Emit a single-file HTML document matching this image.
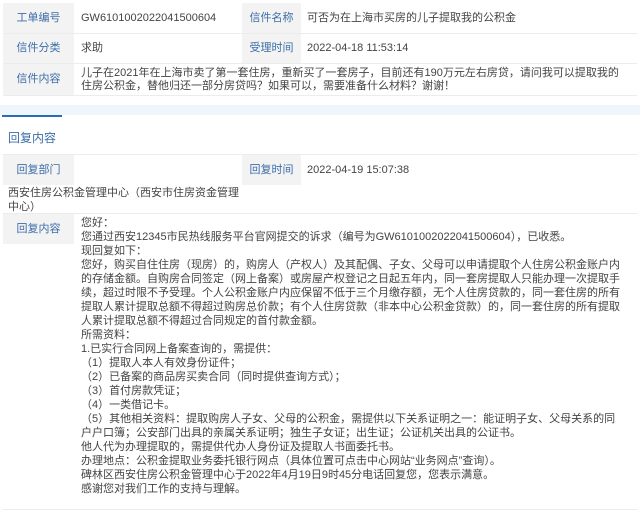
<!DOCTYPE html>
<html><head><meta charset="utf-8"><style>
*{margin:0;padding:0;box-sizing:border-box}
body{width:640px;height:513px;background:#fff;font-family:"Liberation Sans","Noto Sans CJK SC",sans-serif;font-size:11px;color:#444;position:relative;overflow:hidden}
.a{position:absolute;white-space:nowrap}
.lb{position:absolute;background:#f3f3f3;color:#3c6ea8;text-align:center}
.ln{position:absolute;background:#ececec}
</style></head><body>
<!-- top table -->
<div class="lb" style="left:3px;top:3px;width:71px;height:30px;line-height:30px">工单编号</div>
<div class="a" style="left:81px;top:3px;line-height:30px">GW6101002022041500604</div>
<div class="lb" style="left:242px;top:3px;width:59px;height:30px;line-height:30px">信件名称</div>
<div class="a" style="left:307px;top:3px;line-height:30px">可否为在上海市买房的儿子提取我的公积金</div>
<div class="ln" style="left:3px;top:33px;width:634px;height:1px"></div>
<div class="lb" style="left:3px;top:34px;width:71px;height:29px;line-height:29px">信件分类</div>
<div class="a" style="left:81px;top:34px;line-height:29px">求助</div>
<div class="lb" style="left:242px;top:34px;width:59px;height:29px;line-height:29px">受理时间</div>
<div class="a" style="left:307px;top:34px;line-height:29px">2022-04-18 11:53:14</div>
<div class="ln" style="left:3px;top:63px;width:634px;height:1px"></div>
<div class="lb" style="left:3px;top:64px;width:71px;height:31px;line-height:31px">信件内容</div>
<div class="a" style="left:81px;top:67px;line-height:13px">儿子在2021年在上海市卖了第一套住房，重新买了一套房子，目前还有190万元左右房贷，请问我可以提取我的<br>住房公积金，替他归还一部分房贷吗？如果可以，需要准备什么材料？谢谢！</div>
<div class="ln" style="left:3px;top:95px;width:634px;height:1px"></div>
<!-- band -->
<div style="position:absolute;left:0;top:105px;width:640px;height:10px;background:#eef5fc"></div>
<div style="position:absolute;left:2px;top:115px;width:60px;height:2px;background:#2b6cb8"></div>
<div class="a" style="left:8px;top:129px;font-size:12px;color:#3c6ea8">回复内容</div>
<!-- reply table -->
<div class="ln" style="left:3px;top:154px;width:634px;height:1px"></div>
<div class="lb" style="left:3px;top:155px;width:71px;height:30px;line-height:30px">回复部门</div>
<div class="lb" style="left:242px;top:155px;width:59px;height:30px;line-height:30px">回复时间</div>
<div class="a" style="left:307px;top:155px;line-height:30px">2022-04-19 15:07:38</div>
<div class="a" style="left:8px;top:186px;line-height:14px">西安住房公积金管理中心（西安市住房资金管理<br>中心）</div>
<div class="ln" style="left:3px;top:213px;width:634px;height:1px"></div>
<div class="lb" style="left:3px;top:214px;width:71px;height:30px;line-height:30px">回复内容</div>
<div class="a" style="left:81px;top:216px;line-height:14px">您好：<br>您通过西安12345市民热线服务平台官网提交的诉求（编号为GW6101002022041500604），已收悉。<br>现回复如下：<br>您好，购买自住住房（现房）的，购房人（产权人）及其配偶、子女、父母可以申请提取个人住房公积金账户内<br>的存储金额。自购房合同签定（网上备案）或房屋产权登记之日起五年内，同一套房提取人只能办理一次提取手<br>续，超过时限不予受理。个人公积金账户内应保留不低于三个月缴存额，无个人住房贷款的，同一套住房的所有<br>提取人累计提取总额不得超过购房总价款；有个人住房贷款（非本中心公积金贷款）的，同一套住房的所有提取<br>人累计提取总额不得超过合同规定的首付款金额。<br>所需资料：<br>1.已实行合同网上备案查询的，需提供：<br>（1）提取人本人有效身份证件；<br>（2）已备案的商品房买卖合同（同时提供查询方式）；<br>（3）首付房款凭证；<br>（4）一类借记卡。<br>（5）其他相关资料：提取购房人子女、父母的公积金，需提供以下关系证明之一：能证明子女、父母关系的同<br>户户口簿；公安部门出具的亲属关系证明；独生子女证；出生证；公证机关出具的公证书。<br>他人代为办理提取的，需提供代办人身份证及提取人书面委托书。<br>办理地点：公积金提取业务委托银行网点（具体位置可点击中心网站“业务网点”查询）。<br>碑林区西安住房公积金管理中心于2022年4月19日9时45分电话回复您，您表示满意。<br>感谢您对我们工作的支持与理解。</div>
<div class="ln" style="left:3px;top:509px;width:634px;height:1px"></div>
</body></html>
